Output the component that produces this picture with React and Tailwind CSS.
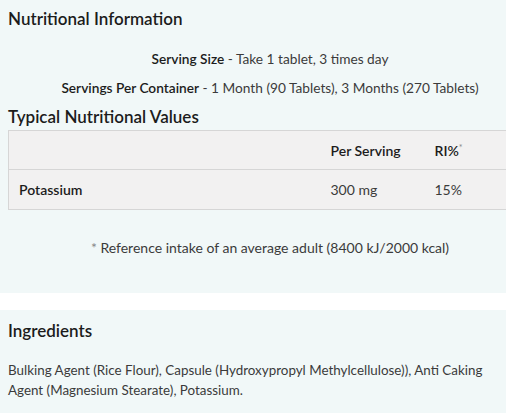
import React from 'react';

export default function App() {
  return (
    <div className="w-full h-[413px] overflow-hidden bg-white font-['Lato',sans-serif]">
      <div className="w-[540px]">
        {/* Nutritional Information panel */}
        <section className="bg-[#f1f8f8] px-2 pt-[7px] h-[293px]">
          <h2 className="text-[17px] leading-6 font-semibold text-[#1c1c1c]">Nutritional Information</h2>
          <div className="mt-[18px] text-center text-[13.7px] leading-[20px] text-[#3b3b3b]">
            <p>
              <span className="font-semibold text-[#1c1c1c]">Serving Size</span> - Take 1 tablet, 3 times day
            </p>
            <p className="mt-[9px]">
              <span className="font-semibold text-[#1c1c1c]">Servings Per Container</span> - 1 Month (90 Tablets), 3 Months (270 Tablets)
            </p>
          </div>
          <h3 className="mt-[7px] text-[17px] leading-6 font-semibold text-[#1c1c1c]">Typical Nutritional Values</h3>
          <table className="mt-[1px] w-full border border-[#d6d6d6] bg-[#f2f1f1] text-[14px] text-left">
            <thead>
              <tr className="h-[39px] border-b border-[#d6d6d6]">
                <th className="px-[10px]"></th>
                <th className="w-[104px] font-semibold text-[#1c1c1c]">Per Serving</th>
                <th className="w-[97px] font-semibold text-[#1c1c1c]">
                  RI%<sup className="text-[9px] font-normal text-[#888]">*</sup>
                </th>
              </tr>
            </thead>
            <tbody>
              <tr className="h-[40px]">
                <td className="px-[10px] font-semibold text-[#1c1c1c]">Potassium</td>
                <td className="text-[#3b3b3b]">300 mg</td>
                <td className="text-[#3b3b3b]">15%</td>
              </tr>
            </tbody>
          </table>
          <p className="mt-[28px] text-center text-[14px] leading-5 text-[#3b3b3b]">
            <span className="text-[#888]">*</span> Reference intake of an average adult (8400 kJ/2000 kcal)
          </p>
        </section>

        {/* Ingredients panel */}
        <section className="mt-[17px] bg-[#f1f8f8] px-2 pt-[9px] pb-6">
          <h2 className="text-[17px] leading-6 font-semibold text-[#1c1c1c]">Ingredients</h2>
          <p className="mt-[17px] w-[490px] text-[13.4px] leading-5 text-[#3b3b3b]">
            Bulking Agent (Rice Flour), Capsule (Hydroxypropyl Methylcellulose)), Anti Caking Agent (Magnesium Stearate), Potassium.
          </p>
        </section>
      </div>
    </div>
  );
}
